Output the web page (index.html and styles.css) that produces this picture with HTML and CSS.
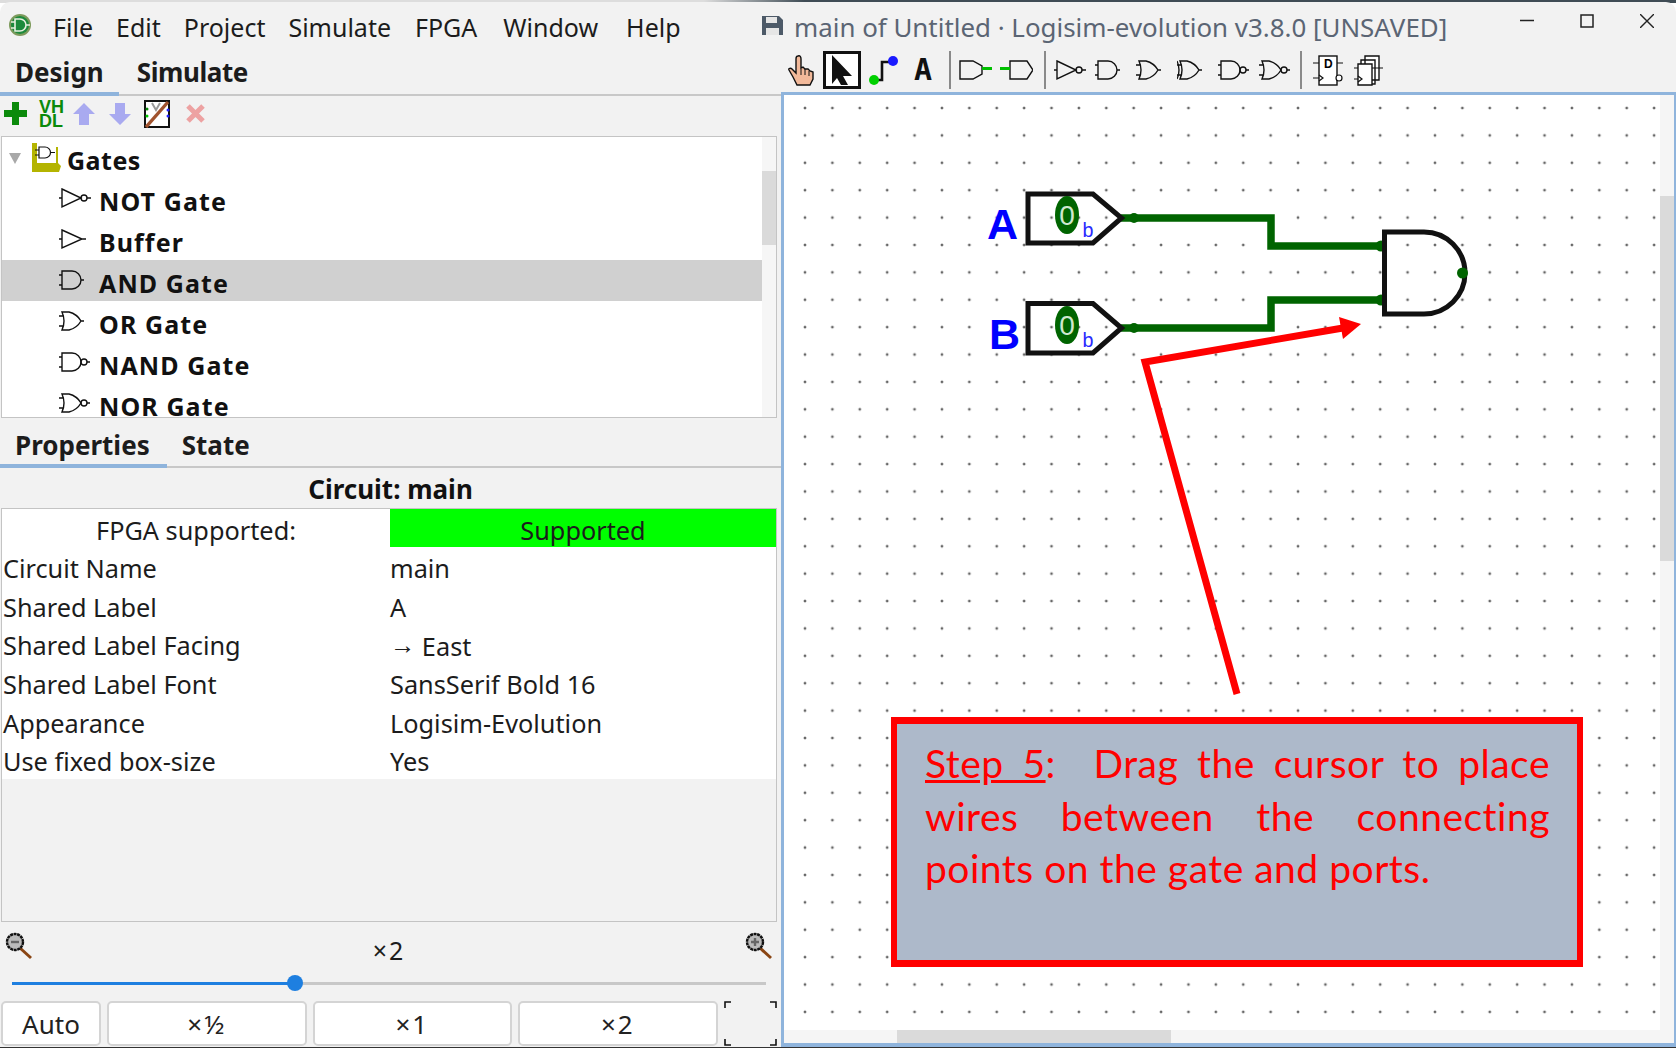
FILE: index.html
```html
<!DOCTYPE html>
<html lang="en">
<head>
  <meta charset="UTF-8">
  <title>main of Untitled - Logisim-evolution</title>
  <link rel="stylesheet" href="styles.css">
</head>
<body>
  <!-- gate shapes, reused by the tree and the toolbar -->
  <svg class="defs" width="0" height="0">
    <symbol id="g-not" viewBox="0 0 32 22"><path d="M0 11H3M3 2L22 11L3 20ZM28 11H32"/><circle cx="25" cy="11" r="3"/></symbol>
    <symbol id="g-buf" viewBox="0 0 32 22"><path d="M0 11H3M3 2L23 11L3 20ZM23 11H27"/></symbol>
    <symbol id="g-and" viewBox="0 0 32 22"><path d="M0 6H3M0 16H3M3 2H13A9 9 0 0 1 13 20H3ZM22 11H25"/></symbol>
    <symbol id="g-or" viewBox="0 0 32 22"><path d="M0 6H5M0 16H5M3 2H10Q18 4 22 11Q18 18 10 20H3Q7 11 3 2ZM22 11H25"/></symbol>
    <symbol id="g-xor" viewBox="0 0 32 22"><path d="M0 6H5M0 16H5M0 2Q4 11 0 20M3 2H10Q18 4 22 11Q18 18 10 20H3Q7 11 3 2ZM22 11H25"/></symbol>
    <symbol id="g-nand" viewBox="0 0 32 22"><path d="M0 6H3M0 16H3M3 2H13A9 9 0 0 1 13 20H3ZM28 11H31"/><circle cx="25" cy="11" r="3"/></symbol>
    <symbol id="g-nor" viewBox="0 0 32 22"><path d="M0 6H5M0 16H5M3 2H10Q18 4 22 11Q18 18 10 20H3Q7 11 3 2ZM28 11H31"/><circle cx="25" cy="11" r="3"/></symbol>
  </svg>

  <div class="app">
    <!-- title bar -->
    <header class="titlebar">
      <svg class="logo" width="24" height="24" viewBox="0 0 24 24">
        <circle cx="12" cy="12" r="11" fill="#7d9a5c"/>
        <circle cx="12" cy="12" r="9" fill="#1d8a3c"/>
        <path d="M7 6H12A6 6 0 0 1 12 18H7ZM3 9H7M3 15H7M18 12H22" fill="none" stroke="#e8f0e0" stroke-width="1.6"/>
      </svg>
      <nav class="menu">
        <span>File</span><span>Edit</span><span>Project</span><span>Simulate</span><span>FPGA</span><span>Window</span><span>Help</span>
      </nav>
      <div class="wintitle">
        <svg width="23" height="21" viewBox="0 0 23 21">
          <path d="M1 1H18L22 5V20H1Z" fill="#4d5a68"/>
          <rect x="5" y="2" width="11" height="6" fill="#e6e6e6"/>
          <rect x="5" y="13" width="13" height="7" fill="#e6e6e6"/>
        </svg>
        <span>main of Untitled · Logisim-evolution v3.8.0 [UNSAVED]</span>
      </div>
      <div class="wincontrols">
        <svg width="14" height="14" viewBox="0 0 14 14"><path d="M0 6.500H14" stroke="#222" stroke-width="1.500"/></svg>
        <svg width="14" height="14" viewBox="0 0 14 14"><rect x="1" y="1" width="12" height="12" fill="none" stroke="#222" stroke-width="1.500"/></svg>
        <svg width="14" height="14" viewBox="0 0 14 14"><path d="M0 0L14 14M14 0L0 14" stroke="#222" stroke-width="1.400"/></svg>
      </div>
    </header>

    <div class="main">
      <!-- left side: explorer and properties -->
      <aside class="side">
        <div class="tabs tabs-top">
          <span class="tab active">Design</span>
          <span class="tab">Simulate</span>
        </div>

        <div class="tools">
          <svg class="tool-add" width="23" height="23" viewBox="0 0 23 23"><path d="M8 0H15V8H23V15H15V23H8V15H0V8H8Z" fill="#0b8a0b"/></svg>
          <div class="tool-vhdl"><div>VH</div><div>DL</div></div>
          <svg class="tool-up" width="22" height="22" viewBox="0 0 22 22"><path d="M11 0L22 11H16V22H6V11H0Z" fill="#a9aaf0"/></svg>
          <svg class="tool-down" width="22" height="22" viewBox="0 0 22 22"><path d="M11 22L22 11H16V0H6V11H0Z" fill="#a9aaf0"/></svg>
          <svg class="tool-wiz" width="26" height="28" viewBox="0 0 26 28">
            <rect x="1" y="1" width="24" height="26" fill="#fff" stroke="#111" stroke-width="2"/>
            <path d="M8 3L12 10L16 3" fill="none" stroke="#999" stroke-width="2"/>
            <circle cx="3" cy="9" r="1.500" fill="#0a8a0a"/><circle cx="3" cy="16" r="1.500" fill="#0c0"/>
            <circle cx="24" cy="10" r="1.500" fill="#22f"/><circle cx="24" cy="16" r="1.500" fill="#22f"/>
            <path d="M2 27L24 2" stroke="#a0522d" stroke-width="3.400"/>
          </svg>
          <svg class="tool-del" width="21" height="21" viewBox="0 0 21 21"><path d="M3 3L18 18M18 3L3 18" stroke="#eda2a2" stroke-width="5"/></svg>
        </div>

        <div class="tree">
          <div class="tree-row tree-root">
            <svg class="tree-arrow" width="12" height="11" viewBox="0 0 12 11"><path d="M0 0H12L6 11Z" fill="#a8a8a8"/></svg>
            <svg class="folder" width="29" height="29" viewBox="0 0 29 29">
              <path d="M0 0H5V20H24V4H26V20L29 23L27 29H0Z" fill="#b4b400"/>
              <path d="M5 3H20V20H5Z" fill="#fff"/>
              <path d="M7 4H13A5 5 0 0 1 13 15H7ZM3 7H7M3 12H7M18 9.500H23" fill="none" stroke="#111" stroke-width="1.200"/>
            </svg>
            <span>Gates</span>
          </div>
          <div class="tree-row"><svg class="gate"><use href="#g-not"/></svg><span>NOT Gate</span></div>
          <div class="tree-row"><svg class="gate"><use href="#g-buf"/></svg><span>Buffer</span></div>
          <div class="tree-row selected"><svg class="gate"><use href="#g-and"/></svg><span>AND Gate</span></div>
          <div class="tree-row"><svg class="gate"><use href="#g-or"/></svg><span>OR Gate</span></div>
          <div class="tree-row"><svg class="gate"><use href="#g-nand"/></svg><span>NAND Gate</span></div>
          <div class="tree-row"><svg class="gate"><use href="#g-nor"/></svg><span>NOR Gate</span></div>
          <div class="vbar"><div class="vbar-thumb"></div></div>
        </div>

        <div class="tabs tabs-props">
          <span class="tab active">Properties</span>
          <span class="tab">State</span>
        </div>

        <div class="props-title">Circuit: main</div>
        <div class="props">
          <div class="prop-fpga">
            <span>FPGA supported:</span>
            <span class="fpga-ok">Supported</span>
          </div>
          <div class="prop"><span>Circuit Name</span><span>main</span></div>
          <div class="prop"><span>Shared Label</span><span>A</span></div>
          <div class="prop"><span>Shared Label Facing</span><span><span class="arrow">→</span> East</span></div>
          <div class="prop"><span>Shared Label Font</span><span>SansSerif Bold 16</span></div>
          <div class="prop"><span>Appearance</span><span>Logisim-Evolution</span></div>
          <div class="prop"><span>Use fixed box-size</span><span>Yes</span></div>
        </div>

        <div class="zoom-row">
          <svg width="30" height="30" viewBox="0 0 30 30">
            <path d="M16 17L27 27" stroke="#8a4513" stroke-width="3"/>
            <circle cx="11" cy="11" r="8" fill="#bbb" stroke="#111" stroke-width="2.400" stroke-dasharray="3 .6"/>
            <path d="M7 11H15" stroke="#666" stroke-width="2.400"/>
          </svg>
          <span>×2</span>
          <svg width="30" height="30" viewBox="0 0 30 30">
            <path d="M16 17L27 27" stroke="#8a4513" stroke-width="3"/>
            <circle cx="11" cy="11" r="8" fill="#bbb" stroke="#111" stroke-width="2.400" stroke-dasharray="3 .6"/>
            <path d="M7 11H15M11 7V15" stroke="#666" stroke-width="2.400"/>
          </svg>
        </div>
        <div class="slider"><div class="slider-fill"></div><div class="slider-thumb"></div></div>
        <div class="zoom-btns">
          <button class="btn btn-auto">Auto</button>
          <button class="btn">×½</button>
          <button class="btn">×1</button>
          <button class="btn">×2</button>
          <svg class="fit" width="53" height="45" viewBox="0 0 53 45"><path d="M1 7V1H7M46 1H52V7M1 38V44H7M46 44H52V38" fill="none" stroke="#111" stroke-width="1.600"/></svg>
        </div>
      </aside>

      <!-- right side: tool bar and canvas -->
      <section class="work">
        <div class="toolbar">
          <svg class="tb-hand" width="26" height="31" viewBox="0 0 26 31">
            <path d="M10 1C12 0 13 2 13 4V13L15 12L17 14L20 14L22 16L25 17V24L22 30H9L5 22L1 15C0 13 3 13 4 14L8 18V4C8 2 9 1 10 1Z" fill="#f2b99a" stroke="#111" stroke-width="1.400"/>
            <path d="M13 14V20M17 14V20M21 16V21" stroke="#111"/>
          </svg>
          <div class="tb-select">
            <svg width="32" height="32" viewBox="0 0 32 32"><path d="M6 1L26 22H17L22 31L15 31L11 24L6 30Z" fill="#111"/></svg>
          </div>
          <svg class="tb-wire" width="30" height="31" viewBox="0 0 30 31">
            <path d="M5 25H13V7H24" fill="none" stroke="#111" stroke-width="2.600"/>
            <circle cx="5" cy="25" r="5" fill="#00d000"/><circle cx="24" cy="6" r="5" fill="#1a1aff"/>
          </svg>
          <span class="tb-text">A</span>
          <i class="tb-sep"></i>
          <svg class="tb-pin" width="33" height="22" viewBox="0 0 33 22"><path d="M1 2H14L23 7V15L14 20H1Z" fill="none" stroke="#111" stroke-width="1.400"/><path d="M23 9.500H33" stroke="#00c000" stroke-width="3"/></svg>
          <svg class="tb-pin" width="33" height="22" viewBox="0 0 33 22"><path d="M10 2H27L33 11L27 20H10Z" fill="none" stroke="#111" stroke-width="1.400"/><path d="M0 9.500H10" stroke="#00c000" stroke-width="3"/></svg>
          <i class="tb-sep tb-sep2"></i>
          <svg class="gate"><use href="#g-not"/></svg>
          <svg class="gate"><use href="#g-and"/></svg>
          <svg class="gate"><use href="#g-or"/></svg>
          <svg class="gate"><use href="#g-xor"/></svg>
          <svg class="gate"><use href="#g-nand"/></svg>
          <svg class="gate"><use href="#g-nor"/></svg>
          <i class="tb-sep tb-sep3"></i>
          <svg class="tb-ff" width="30" height="31" viewBox="0 0 30 31">
            <rect x="6" y="1" width="18" height="29" fill="#fff" stroke="#111" stroke-width="1.400"/>
            <path d="M0 8H6M0 23H6M6 20L10 23L6 26M24 23H25M24 8H30" fill="none" stroke="#111" stroke-width="1.200"/>
            <circle cx="26" cy="23" r="3" fill="#fff" stroke="#111" stroke-width="1.200"/>
            <text x="11" y="13" class="ff-letter">D</text>
          </svg>
          <svg class="tb-sub" width="29" height="31" viewBox="0 0 29 31">
            <path d="M11 1H25V25H11ZM7 5H21V29H7Z" fill="#fff" stroke="#111" stroke-width="1.400"/>
            <path d="M4 9H18V30H4Z" fill="#fff" stroke="#111" stroke-width="1.400"/>
            <path d="M0 24H4M0 13H4M18 13H29M4 21L8 24L4 27" fill="none" stroke="#111" stroke-width="1.200"/>
          </svg>
        </div>

        <div class="canvas">
          <!-- viewBox is in page coordinates -->
          <svg class="circuit" viewBox="785 95 889 948">
            <g class="wires">
              <path d="M1122 218H1272V246H1382"/>
              <path d="M1122 328H1272V300H1382"/>
            </g>
            <g fill="#006400">
              <circle cx="1135" cy="218" r="5"/><circle cx="1135" cy="328" r="5"/>
              <circle cx="1382" cy="246" r="5.500"/><circle cx="1382" cy="300" r="5.500"/>
            </g>
            <g class="outline">
              <path d="M1029 194H1094L1122.500 218L1094 243H1029Z"/>
              <path d="M1029 303.500H1094L1122.500 328L1094 353H1029Z"/>
              <path d="M1425 232H1385.500V314H1425A41 41 0 0 0 1425 232Z"/>
            </g>
            <circle cx="1463.500" cy="273" r="5.500" fill="#006400"/>
            <ellipse cx="1068" cy="215" rx="12" ry="19" fill="#006400"/>
            <ellipse cx="1068" cy="325" rx="12" ry="19" fill="#006400"/>
            <text x="1068" y="225" class="pin-val">0</text>
            <text x="1068" y="335" class="pin-val">0</text>
            <text x="1083" y="237" class="pin-radix">b</text>
            <text x="1083" y="347" class="pin-radix">b</text>
            <text x="988" y="239" class="pin-label">A</text>
            <text x="990" y="349" class="pin-label">B</text>
            <path d="M1238 694L1146 362L1344 328" fill="none" stroke="#f00" stroke-width="7"/>
            <path d="M1362 324L1340 317L1344 339Z" fill="#f00"/>
          </svg>

          <div class="callout">
            <div class="callout-line"><u>Step 5</u>:&nbsp; Drag the cursor to place</div>
            <div class="callout-line">wires between the connecting</div>
            <div>points on the gate and ports.</div>
          </div>

          <div class="scroll-v"><div class="scroll-v-thumb"></div></div>
          <div class="scroll-h"><div class="scroll-h-thumb"></div></div>
        </div>
      </section>
    </div>
  </div>
</body>
</html>
```

FILE: styles.css
```css
* {
  box-sizing: border-box;
}
body {
  margin: 0;
  height: 1055px;
  overflow: hidden;
  font-family: "Noto Sans", sans-serif;
  font-size: 25px;
  color: #1c1c1c;
  background: #fff linear-gradient(to right, #ddd 42%, #3f4c55 48%) no-repeat top / 100% 3px;
}
.defs {
  position: absolute;
}
.app {
  height: 1046px;
  margin-top: 2px;
  border-radius: 10px 10px 0 0;
  border-bottom: 1px solid #333;
  background: #f2f2f2;
  display: flex;
  flex-direction: column;
}

/* title bar */
.titlebar {
  height: 46px;
  padding-top: 4px;
  display: flex;
  align-items: center;
  flex-shrink: 0;
}
.logo {
  margin-left: 8px;
  margin-right: 21px;
  margin-top: -5px;
}
.menu {
  display: flex;
  gap: 23px;
  width: 708px;
}
.menu span:nth-child(5) {
  margin-left: 1px;
}
.menu span:nth-child(6) {
  margin-left: 3px;
}
.menu span:nth-child(7) {
  margin-left: 5px;
}
.wintitle {
  display: flex;
  align-items: center;
  gap: 10px;
  color: #5b6574;
  width: 760px;
  font-size: 25.900px;
}
.wintitle svg {
  margin-top: -4px;
}
.wincontrols {
  display: flex;
  gap: 46px;
  margin-left: -1px;
  margin-top: -12px;
}

.main {
  flex: 1;
  display: grid;
  grid-template-columns: 781px 1fr;
  min-height: 0;
}

/* left side */
.side {
  display: flex;
  flex-direction: column;
  min-width: 0;
}
.tabs {
  display: flex;
  border-bottom: 2px solid #c8c8c8;
  font-weight: 700;
  font-size: 26px;
}
.tabs-top {
  height: 48px;
}
.tabs-props {
  height: 50px;
}
.tab {
  padding: 7px 15px 0;
  margin-bottom: -2px;
  line-height: 34px;
}
.tabs-props .tab {
  padding-top: 10px;
  padding-right: 17px;
}
.tabs-props .tab + .tab {
  padding-left: 15px;
}
.tabs-top .tab + .tab {
  padding-left: 18px;
  letter-spacing: -.4px;
}
.tab.active {
  border-bottom: 4px solid #8fb4dc;
}
.tools {
  height: 40px;
  padding-bottom: 5px;
  display: flex;
  align-items: center;
}
.tool-add { margin-left: 4px; }
.tool-vhdl {
  margin-left: 12px;
  font-family: "Liberation Sans", sans-serif;
  font-weight: 700;
  font-size: 18px;
  line-height: 14px;
  color: #0b8a0b;
}
.tool-up { margin-left: 9px; }
.tool-down { margin-left: 14px; }
.tool-wiz { margin-left: 13px; }
.tool-del { margin-left: 15px; }

.tree {
  position: relative;
  height: 282px;
  margin: 0 4px 0 1px;
  border: 1px solid #c4c4c4;
  background: #fff;
  overflow: hidden;
  font-weight: 700;
  font-size: 25px;
  letter-spacing: 1.100px;
  color: #111;
}
.tree-row {
  height: 41px;
  display: flex;
  align-items: center;
  padding-left: 57px;
  gap: 8px;
}
.tree-row > span {
  margin-top: 4px;
}
.tree-root {
  padding-left: 7px;
  gap: 0;
  letter-spacing: .5px;
}
.tree-arrow { margin-right: 11px; margin-top: 2px; }
.folder { margin-right: 6px; margin-top: -1px; }
.tree-row.selected {
  background: #d0d0d0;
  margin-right: 14px;
}
.gate {
  width: 32px;
  height: 22px;
  flex-shrink: 0;
  fill: none;
  stroke: #111;
  stroke-width: 1.400;
  overflow: visible;
}
.tree .gate {
  margin-top: -2px;
}
.vbar {
  position: absolute;
  top: 0;
  right: 0;
  bottom: 0;
  width: 14px;
  background: #f6f6f6;
}
.vbar-thumb {
  margin-top: 34px;
  height: 74px;
  background: #dadada;
}

.props-title {
  height: 40px;
  font-weight: 700;
  font-size: 26px;
  text-align: center;
  line-height: 42px;
  color: #111;
}
.props {
  height: 414px;
  margin: 0 4px 0 1px;
  border: 1px solid #c4c4c4;
  font-size: 25.300px;
  flex-shrink: 0;
}
.prop-fpga {
  display: grid;
  grid-template-columns: 388px 1fr;
  grid-template-rows: 38px;
  height: 38px;
  line-height: 42px;
  text-align: center;
  background: #fff;
}
.fpga-ok {
  background: #0f0;
}
.prop {
  display: grid;
  grid-template-columns: 388px 1fr;
  grid-template-rows: 38.700px;
  height: 38.700px;
  line-height: 43px;
  background: #fff;
}
.prop > span:first-child {
  padding-left: 1px;
}
.arrow {
  font-family: "Liberation Sans", sans-serif;
  vertical-align: 2px;
}

.zoom-row {
  height: 48px;
  display: flex;
  justify-content: space-between;
  align-items: center;
  padding: 0 7px 0 4px;
  font-size: 25px;
  letter-spacing: 2px;
}
.zoom-row span {
  margin-top: 8px;
}
.slider {
  position: relative;
  height: 3px;
  margin: 12px 15px 0 12px;
  background: #c8c8c8;
}
.slider-fill {
  width: 283px;
  height: 3px;
  background: #1e7fe0;
}
.slider-thumb {
  position: absolute;
  left: 275px;
  top: -7px;
  width: 16px;
  height: 16px;
  border-radius: 50%;
  background: #1e7fe0;
}
.zoom-btns {
  display: flex;
  gap: 6px;
  margin: 16px 0 0 1px;
  height: 45px;
}
.btn {
  width: 199.500px;
  height: 45px;
  padding: 1px 0 0;
  font: inherit;
  font-size: 26px;
  letter-spacing: 2px;
  color: #222;
  background: #fff;
  border: 2px solid #d4d4d4;
  border-radius: 5px;
}
.btn-auto {
  width: 100px;
  letter-spacing: 0;
}
.fit {
  margin-left: 0;
}

/* tool bar over the canvas */
.work {
  display: flex;
  flex-direction: column;
  min-width: 0;
}
.toolbar {
  height: 44px;
  display: flex;
  align-items: center;
  flex-shrink: 0;
}
.tb-hand { margin-left: 7px; }
.tb-select {
  width: 38px;
  height: 38px;
  margin-left: 9px;
  border: 3px solid #111;
  background: #fff;
}
.tb-select svg {
  display: block;
}
.tb-wire { margin-left: 8px; }
.tb-text {
  width: 22px;
  margin-left: 13px;
  font-family: "DejaVu Sans Mono", monospace;
  font-weight: 700;
  font-size: 30px;
  line-height: 38px;
  color: #111;
  text-align: center;
}
.tb-sep {
  width: 2px;
  height: 38px;
  margin-left: 15px;
  background: #8a8a8a;
}
.tb-pin { margin-left: 8px; flex-shrink: 0; }
.toolbar .gate { margin-left: 9px; }
.tb-sep2 { margin-left: 11px; }
.tb-sep2 + .gate { margin-left: 8px; }
.tb-sep3 { margin-left: 9px; }
.tb-ff { margin-left: 11px; }
.tb-sub { margin-left: 11px; }
.ff-letter {
  font-family: "Liberation Sans", sans-serif;
  font-size: 12px;
  font-weight: 700;
}

/* canvas */
.canvas {
  position: relative;
  flex: 1;
  border: 3px solid #8fb4dc;
  border-bottom-width: 4px;
  border-right-width: 2px;
  background-color: #fff;
  background-image: radial-gradient(circle, #666 1.100px, transparent 1.700px);
  background-size: 27.400px 27.400px;
  background-position: 7.300px -0.700px;
  overflow: hidden;
}
.circuit {
  position: absolute;
  left: 0;
  top: 0;
  width: 889px;
  height: 948px;
}
.wires path {
  fill: none;
  stroke: #006400;
  stroke-width: 7.500;
}
.outline path {
  fill: none;
  stroke: #111;
  stroke-width: 5;
}
.pin-val {
  font-family: "Liberation Sans", sans-serif;
  font-size: 28px;
  text-anchor: middle;
  fill: #cfe8cf;
}
.pin-radix {
  font-family: "Liberation Mono", monospace;
  font-size: 20px;
  fill: #2a2aff;
}
.pin-label {
  font-family: "Liberation Sans", sans-serif;
  font-weight: 700;
  font-size: 43px;
  fill: #0000ff;
}
.callout {
  position: absolute;
  left: 107px;
  top: 622px;
  width: 692px;
  height: 250px;
  padding: 13px 27px 0 28px;
  border: solid #f00;
  border-width: 7px 6px;
  background: #adb9ca;
  font-family: Lato, sans-serif;
  font-size: 39px;
  letter-spacing: .5px;
  line-height: 52.700px;
  color: #f00;
}
.callout-line {
  text-align: justify;
  text-align-last: justify;
}
.scroll-v {
  position: absolute;
  right: 0;
  top: 0;
  bottom: 0;
  width: 14px;
  background: #f5f5f5;
}
.scroll-v-thumb {
  margin-top: 101px;
  height: 365px;
  background: #dadada;
}
.scroll-h {
  position: absolute;
  left: 0;
  right: 14px;
  bottom: 0;
  height: 13px;
  background: #f5f5f5;
}
.scroll-h-thumb {
  margin-left: 113px;
  width: 274px;
  height: 13px;
  background: #dadada;
}
```
